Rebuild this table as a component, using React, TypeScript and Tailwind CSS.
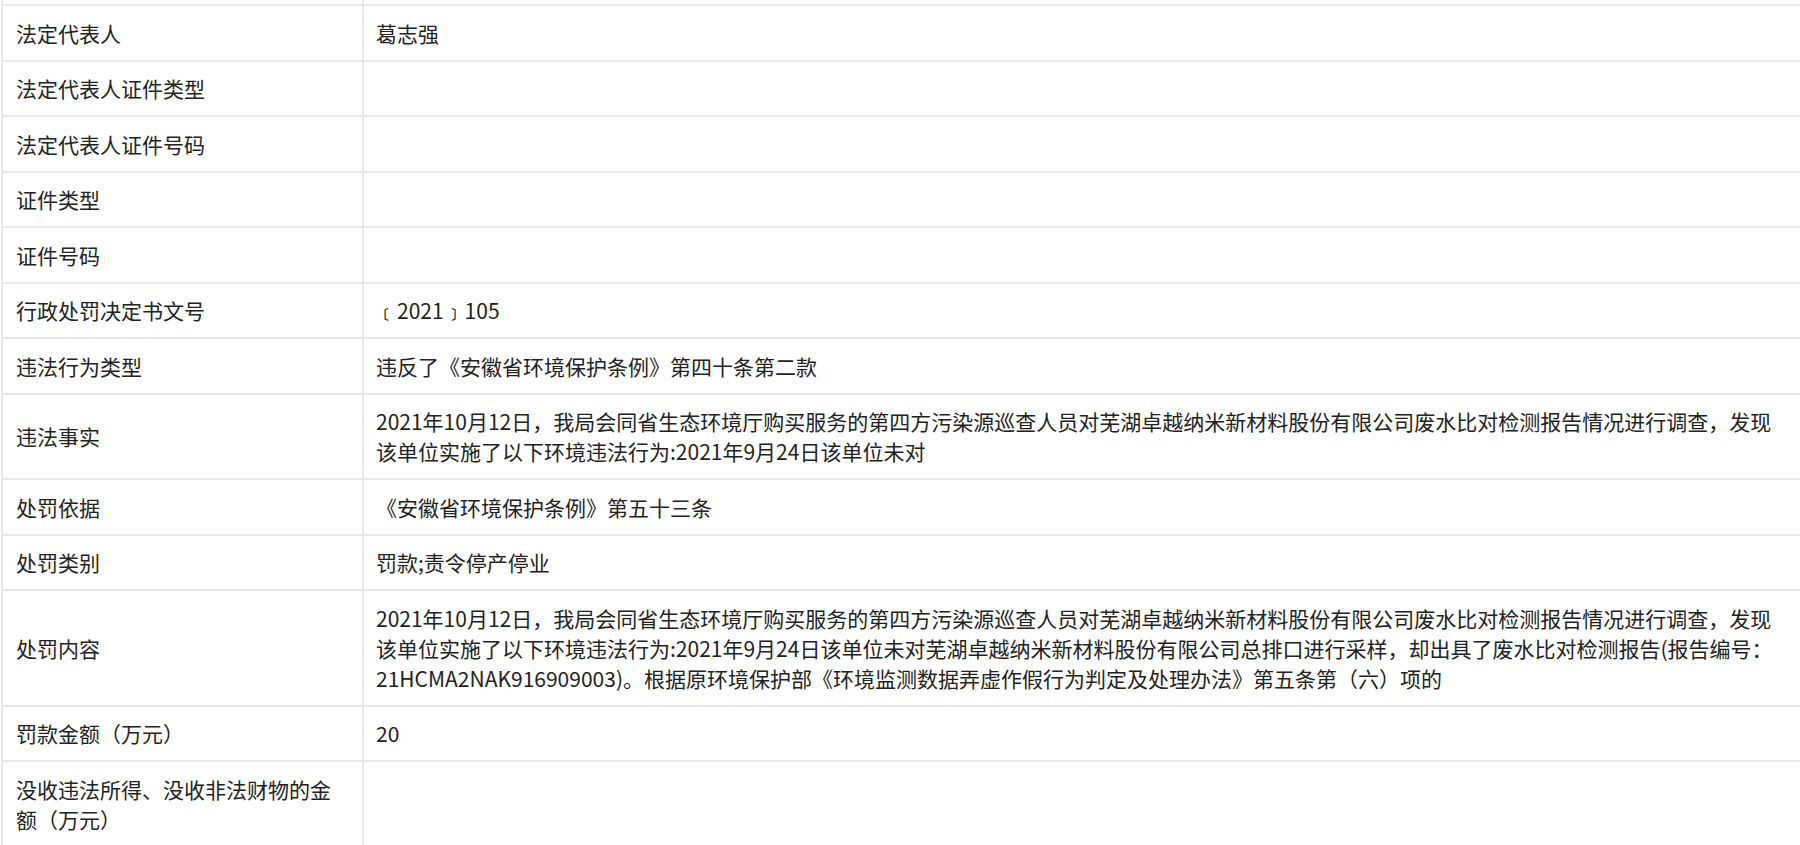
const rows: { label: string; value?: string[] }[] = [
  { label: "法定代表人", value: ["葛志强"] },
  { label: "法定代表人证件类型" },
  { label: "法定代表人证件号码" },
  { label: "证件类型" },
  { label: "证件号码" },
  { label: "行政处罚决定书文号", value: ["﹝2021﹞105"] },
  { label: "违法行为类型", value: ["违反了《安徽省环境保护条例》第四十条第二款"] },
  {
    label: "违法事实",
    value: [
      "2021年10月12日，我局会同省生态环境厅购买服务的第四方污染源巡查人员对芜湖卓越纳米新材料股份有限公司废水比对检测报告情况进行调查，发现",
      "该单位实施了以下环境违法行为:2021年9月24日该单位未对",
    ],
  },
  { label: "处罚依据", value: ["《安徽省环境保护条例》第五十三条"] },
  { label: "处罚类别", value: ["罚款;责令停产停业"] },
  {
    label: "处罚内容",
    value: [
      "2021年10月12日，我局会同省生态环境厅购买服务的第四方污染源巡查人员对芜湖卓越纳米新材料股份有限公司废水比对检测报告情况进行调查，发现",
      "该单位实施了以下环境违法行为:2021年9月24日该单位未对芜湖卓越纳米新材料股份有限公司总排口进行采样，却出具了废水比对检测报告(报告编号：",
      "21HCMA2NAK916909003)。根据原环境保护部《环境监测数据弄虚作假行为判定及处理办法》第五条第（六）项的",
    ],
  },
  { label: "罚款金额（万元）", value: ["20"] },
  { label: "没收违法所得、没收非法财物的金额（万元）" },
];

export default function App() {
  return (
    <div className="h-[845px] overflow-hidden bg-white font-['Noto_Sans_CJK_SC',sans-serif] text-[21px] leading-[30px] text-[#222]">
      <div className="ml-px flex flex-col border-l-2 border-[#e8e8e8]">
        {/* tail of the row above */}
        <div className="grid h-[4px] grid-cols-[361px_1fr]">
          <div className="border-r-2 border-[#e8e8e8]" />
          <div />
        </div>
        {rows.map((r) => (
          <div
            key={r.label}
            className="grid grid-cols-[361px_1fr] border-t-2 border-[#e8e8e8]"
          >
            <div className="flex items-center border-r-2 border-[#e8e8e8] py-[11.75px] pl-[13px] pr-[12px]">
              <span className="min-h-[30px]">{r.label}</span>
            </div>
            <div className="flex flex-col justify-center whitespace-nowrap py-[11.75px] pl-[12px]">
              {r.value ? (
                r.value.map((line, i) => <div key={i}>{line}</div>)
              ) : (
                <div className="h-[30px]" />
              )}
            </div>
          </div>
        ))}
      </div>
    </div>
  );
}
